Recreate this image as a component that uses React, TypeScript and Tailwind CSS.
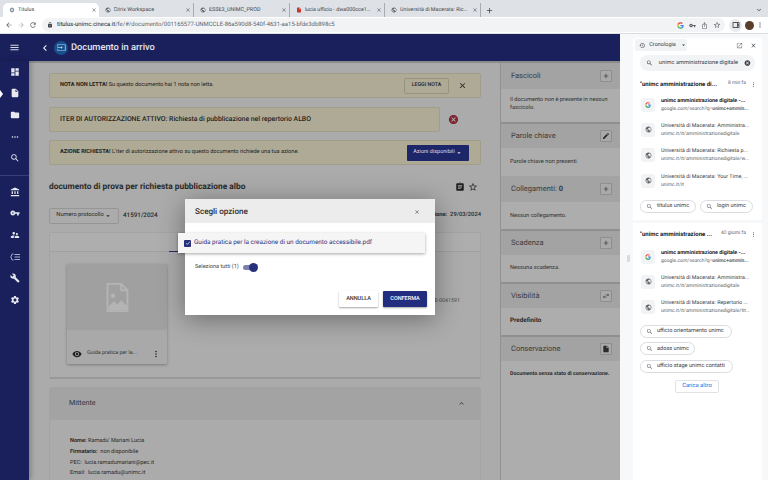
import React from "react";
import {
  MdMenu, MdDashboard, MdInsertDriveFile, MdFolder, MdMoreHoriz, MdSearch, MdAccountBalance, MdVpnKey,
  MdSupervisorAccount, MdBuild, MdSettings, MdChevronLeft, MdClose, MdArrowBack, MdArrowForward, MdRefresh,
  MdLock, MdAdd, MdArrowDropDown, MdCancel, MdAssignment, MdStarBorder, MdEdit, MdSwapHoriz, MdMoreVert,
  MdExpandLess, MdExpandMore, MdHistory, MdOpenInNew, MdCheck, MdVisibility, MdPublic,
  MdOutlineIosShare, MdOutlineViewSidebar, MdInput,
} from "react-icons/md";

const GoogleG = ({ s = 6 }: { s?: number }) => (
  <svg width={s} height={s} viewBox="0 0 24 24">
    <path fill="#4285F4" d="M23 12.300c0-.8-.1-1.600-.2-2.300H12v4.400h6.200a5.300 5.300 0 0 1-2.300 3.500v2.900h3.700c2.200-2 3.400-5 3.400-8.500z" />
    <path fill="#34A853" d="M12 23.500c3.100 0 5.700-1 7.600-2.800l-3.700-2.900c-1 .7-2.300 1.100-3.900 1.100-3 0-5.500-2-6.400-4.700H1.800v3a11.500 11.500 0 0 0 10.200 6.300z" />
    <path fill="#FBBC05" d="M5.600 14.200a6.900 6.900 0 0 1 0-4.400v-3H1.800a11.500 11.500 0 0 0 0 10.400z" />
    <path fill="#EA4335" d="M12 5.100c1.700 0 3.200.6 4.400 1.700l3.300-3.300A11.500 11.500 0 0 0 1.800 6.800l3.800 3c.9-2.700 3.400-4.700 6.400-4.700z" />
  </svg>
);

const Tab = ({ icon, label, active }: { icon: React.ReactNode; label: string; active?: boolean }) => (
  <div className={`w-[95.500px] h-[14px] flex items-center pl-[6px] pr-[2px] gap-[3px] text-[5.400px] text-[#45484d] shrink-0 border-r border-[#a8abb0] ${active ? "bg-white rounded-t-[5px] border-r-0" : ""}`}>
    {icon}
    <span className="flex-1 truncate">{label}</span>
    <MdClose size={6} className="text-[#50535a]" />
  </div>
);

const SideIcon = ({ children, marker }: { children: React.ReactNode; marker?: boolean }) => (
  <div className="relative h-[21.6px] flex items-center justify-center text-[#e8e9f0]">
    {marker && <div className="absolute left-0 top-[7px] w-0 h-0 border-y-[4px] border-y-transparent border-l-[3px] border-l-white" />}
    {children}
  </div>
);

const Alert = ({ children, w = "w-full" }: { children: React.ReactNode; w?: string }) => (
  <div className={`${w} h-[25px] px-[10px] flex items-center rounded-[2px] bg-[#aeaa96] border border-[#a19d8a] text-[5.600px] text-[#222]`}>
    {children}
  </div>
);

const PanelHead = ({ title, icon, sep = true }: { title: React.ReactNode; icon: React.ReactNode; sep?: boolean }) => (
  <div className={`h-[26px] pl-[10px] pr-[8px] flex items-center justify-between bg-[#a3a3a3] text-[7.500px] text-[#3a3a3a] shrink-0 ${sep ? "border-t-2 border-[#8f8f8f]" : ""}`}>
    <span>{title}</span>
    <span className="w-[12px] h-[12px] flex items-center justify-center border border-[#8e8e8e] rounded-[1px] text-[#2b2b2b] bg-[#a9a9a9]">{icon}</span>
  </div>
);

const Globe = ({ s = 7 }: { s?: number }) => <MdPublic size={s} className="text-[#5f6368] shrink-0" />;

const HistoryRow = ({ title, url, bold, g }: { title: string; url: React.ReactNode; bold?: boolean; g?: boolean }) => (
  <div className="h-[25.300px] flex items-center pl-[8px] pr-[10px] gap-[6px]">
    <div className="w-[14px] h-[14px] rounded-[3px] bg-[#f1f3f4] flex items-center justify-center shrink-0">
      {g ? <GoogleG /> : <Globe />}
    </div>
    <div className="min-w-0 flex-1 leading-[8px]">
      <div className={`whitespace-nowrap overflow-hidden text-[5.400px] ${bold ? "font-bold text-[#202124]" : "text-[#3c4043]"}`}>{title}</div>
      <div className="whitespace-nowrap overflow-hidden text-[5px] text-[#5f6368]">{url}</div>
    </div>
  </div>
);

const Chip = ({ label, w }: { label: string; w: string }) => (
  <div className={`${w} h-[13px] flex items-center gap-[4px] pl-[5px] rounded-full border border-[#dadce0] bg-white text-[5.600px] text-[#3c4043] shrink-0`}>
    <MdSearch size={7} className="text-[#5f6368] shrink-0" />
    <span className="whitespace-nowrap">{label}</span>
  </div>
);

const SectionTitle = ({ title, time }: { title: string; time: string }) => (
  <div className="flex items-center pl-[7px] pr-[5px] h-[12px]">
    <span className="flex-1 whitespace-nowrap overflow-hidden text-[6px] font-bold text-[#202124]">{title}</span>
    <span className="text-[5px] text-[#5f6368] mr-[4px] whitespace-nowrap">{time}</span>
    <MdMoreVert size={7} className="text-[#5f6368] shrink-0" />
  </div>
);

export default function App() {
  return (
    <div className="w-[768px] h-[480px] overflow-hidden flex flex-col bg-white font-['Roboto',sans-serif] [text-rendering:geometricPrecision]">
      {/* browser tabs */}
      <div className="h-[17px] bg-[#dee1e6] flex items-end pl-[3px] shrink-0">
        <Tab active label="Titulus" icon={<MdSettings size={6} className="text-[#7b8a9a]" />} />
        <Tab label="Citrix Workspace" icon={<Globe s={6} />} />
        <Tab label="ESSE3_UNIMC_PROD" icon={<Globe s={6} />} />
        <Tab label="lucia ufficio - dwa000cce140re" icon={<MdInsertDriveFile size={6} className="text-[#c0392b]" />} />
        <Tab label="Università di Macerata: Richies" icon={<Globe s={6} />} />
        <div className="w-[18px] flex items-center justify-center h-[14px] text-[#45484d]"><MdAdd size={9} /></div>
        <div className="flex-1 flex justify-end pr-[5px] h-[14px] items-center"><MdExpandMore size={8} className="text-[#45484d]" /></div>
      </div>
      {/* address bar */}
      <div className="h-[17px] bg-white border-b border-[#dadce0] flex items-center pl-[5px] pr-[4px] shrink-0 text-[#5f6368]">
        <MdArrowBack size={8} />
        <MdArrowForward size={8} className="ml-[4px] text-[#b8babd]" />
        <MdRefresh size={8} className="ml-[4px]" />
        <div className="ml-[5px] flex-1 h-[14px] rounded-full bg-[#f1f3f4] flex items-center pl-[3px] pr-[4px] gap-[2px]">
          <MdLock size={6} className="text-[#45484d] ml-[2px]" />
          <span className="ml-[2px] text-[5.950px] text-[#5f6368] flex-1 truncate"><span className="text-[#202124]">titulus-unimc.cineca.it</span>/fe/#/documento/001165577-UNMCCLE-86a590d8-540f-4631-aa15-bfde3db898c5</span>
          <div className="flex items-center gap-[5px]">
            <GoogleG s={7} />
            <MdVpnKey size={7} />
            <MdOutlineIosShare size={7} />
            <MdStarBorder size={8} />
          </div>
        </div>
        <div className="ml-[4px] w-[13px] h-[13px] rounded-full bg-[#e8eaed] flex items-center justify-center text-[#202124]"><MdOutlineViewSidebar size={8} /></div>
        <div className="ml-[3px] w-[9px] h-[9px] rounded-full bg-[#5a3d2b]" />
        <MdMoreVert size={8} className="ml-[2px]" />
      </div>

      <div className="flex-1 min-h-0 flex">
        {/* web app */}
        <div className="relative w-[620px] shrink-0 flex flex-col">
          <div className="h-[27px] bg-[#1a205c] flex items-center shrink-0 text-white">
            <div className="w-[29px] flex justify-center text-[#d5d7e4]"><MdMenu size={11} /></div>
            <MdChevronLeft size={12} className="ml-[10px]" />
            <div className="ml-[3px] w-[14px] h-[14px] rounded-full bg-[#174f8c] flex items-center justify-center text-[#bcd8f2]"><MdInput size={9} /></div>
            <span className="ml-[3px] text-[9.300px] font-medium text-[#e4e5ee]">Documento in arrivo</span>
          </div>
          <div className="flex-1 min-h-0 flex">
            {/* left rail */}
            <div className="relative w-[29px] bg-[#1a205c] shrink-0 overflow-hidden shadow-[2px_0_5px_rgba(0,0,0,0.25)]">
              <SideIcon><MdDashboard size={10} /></SideIcon>
              <SideIcon marker><MdInsertDriveFile size={10} /></SideIcon>
              <SideIcon><MdFolder size={10} /></SideIcon>
              <SideIcon><MdMoreHoriz size={10} /></SideIcon>
              <SideIcon><MdSearch size={10} /></SideIcon>
              <div className="mt-[6px] mb-[5px] border-t border-[#3a4077]" />
              <SideIcon><MdAccountBalance size={10} /></SideIcon>
              <SideIcon><MdVpnKey size={10} /></SideIcon>
              <SideIcon><MdSupervisorAccount size={10} /></SideIcon>
              <SideIcon>
                <svg width="10" height="8" viewBox="0 0 10 8" fill="none" stroke="#a9adc8" strokeWidth="1">
                  <path d="M3.500 1H2.200L.8 4l1.400 3h1.300" />
                  <path d="M4.500 1.500H10M4.500 4H10M4.500 6.500H10" />
                </svg>
              </SideIcon>
              <SideIcon><MdBuild size={10} /></SideIcon>
              <SideIcon><MdSettings size={10} /></SideIcon>
            </div>
            {/* main column */}
            <div className="w-[471px] shrink-0 bg-[#ababab] border-t-2 border-[#8b8b8b] pl-[20px] pr-[19px] pt-[10px] overflow-hidden">
              <Alert>
                <span className="flex-1"><b>NOTA NON LETTA!</b> Su questo documento hai 1 nota non letta.</span>
                <span className="w-[45px] h-[16px] flex items-center justify-center border border-[#97937f] rounded-[2px] text-[5.300px] font-medium mr-[9px]">LEGGI NOTA</span>
                <MdClose size={9} className="mr-[3px]" />
              </Alert>
              <div className="mt-[9px] flex items-center">
                <Alert w="w-[391px]"><span className="text-[6.850px] font-medium">ITER DI AUTORIZZAZIONE ATTIVO: Richiesta di pubblicazione nel repertorio ALBO</span></Alert>
                <MdCancel size={11} className="ml-[8px] text-[#7d2530]" />
              </div>
              <div className="mt-[8px]">
                <Alert>
                  <span className="flex-1"><b>AZIONE RICHIESTA!</b> L'iter di autorizzazione attivo su questo documento richiede una tua azione.</span>
                  <span className="w-[62px] h-[16px] flex items-center justify-center bg-[#1c2668] rounded-[1px] text-[5.500px] text-[#d8daea]">Azioni disponibili <MdArrowDropDown size={8} /></span>
                  <span className="w-[1px]" />
                </Alert>
              </div>
              <div className="mt-[15px] h-[14px] flex items-center">
                <span className="flex-1 text-[8.400px] font-bold text-[#2a2a2a]">documento di prova per richiesta pubblicazione albo</span>
                <MdAssignment size={10} className="text-[#1f1f1f]" />
                <MdStarBorder size={10} className="ml-[3px] mr-[3px] text-[#2a2a2a]" />
              </div>
              <div className="mt-[13px] flex items-center h-[17px]">
                <span className="w-[70px] h-[16px] flex items-center justify-center border border-[#969696] rounded-[2px] text-[5.700px] text-[#2a2a2a]">Numero protocollo <MdArrowDropDown size={8} /></span>
                <span className="ml-[4px] text-[6.300px] font-medium text-[#2a2a2a] flex-1">41591/2024</span>
                <span className="text-[5.800px] font-medium text-[#2a2a2a]"><b>Data registrazione:</b>&nbsp; 29/03/2024</span>
              </div>
              {/* tab card */}
              <div className="mt-[8px] h-[147px] bg-[#acacac] border border-[#a4a4a4] border-b-2 border-b-[#999] rounded-[2px] flex flex-col">
                <div className="h-[19px] border-b border-[#a0a0a0] bg-[#aeaeae] relative shrink-0">
                  <div className="absolute left-[119px] bottom-[-1px] w-[16px] h-[1.500px] bg-[#27306b]" />
                </div>
                <div className="flex-1 flex pl-[17px] pt-[12px]">
                  <div className="w-[100px] h-[100px] flex flex-col bg-[#a9a9a9] shadow-[0_1px_3px_rgba(0,0,0,0.3)] rounded-[1px]">
                    <div className="h-[66px] bg-[#a0a0a0] flex items-center justify-center">
                      <svg width="25" height="29" viewBox="0 0 26 32" fill="none" stroke="#b4b4b4" strokeWidth="2">
                        <path d="M2 1h15l7 7v23H2z" />
                        <path d="M17 1v7h7" />
                        <circle cx="8" cy="14" r="2.500" fill="#b4b4b4" stroke="none" />
                        <path d="M3 26l6-6 4 4 4-5 7 7v4H3z" fill="#b4b4b4" stroke="none" />
                      </svg>
                    </div>
                    <div className="flex-1 flex items-end pb-[5px] pl-[5px] pr-[6px] gap-[5px]">
                      <MdVisibility size={10} className="text-[#222]" />
                      <span className="flex-1 text-[5.300px] text-[#333] whitespace-nowrap pb-[1px]">Guida pratica per la...</span>
                      <MdMoreVert size={10} className="text-[#222]" />
                    </div>
                  </div>
                  <div className="ml-[246px] pt-[34px] text-[5.300px] text-[#4a4a4a]">UNMCCLE-0041591</div>
                </div>
              </div>
              {/* Mittente */}
              <div className="mt-[8px] h-[33px] bg-[#a3a3a3] rounded-t-[2px] flex items-center justify-between pl-[20px] pr-[15px] text-[7.200px] text-[#333]">
                <span>Mittente</span>
                <MdExpandLess size={9} className="text-[#444]" />
              </div>
              <div className="h-[70px] bg-[#ababab] border-x border-[#a4a4a4] pl-[20px] pt-[16px] text-[5.600px] text-[#2a2a2a] leading-[10.800px]">
                <div><b>Nome:</b> Ramadu' Mariani Lucia</div>
                <div><b>Firmatario:</b>&nbsp; non disponibile</div>
                <div>PEC:&nbsp; lucia.ramadumariani@pec.it</div>
                <div>Email:&nbsp; lucia.ramadu@unimc.it</div>
              </div>
            </div>
            {/* right panel */}
            <div className="w-[120px] shrink-0 bg-[#adadad] border-l border-[#919191] flex flex-col overflow-hidden border-t-2 border-t-[#8b8b8b]">
              <PanelHead sep={false} title="Fascicoli" icon={<MdAdd size={8} />} />
              <div className="h-[33px] px-[9px] pt-[8px] text-[5.700px] text-[#333] leading-[7.500px]">Il documento non è presente in nessun fascicolo.</div>
              <PanelHead title="Parole chiave" icon={<MdEdit size={8} />} />
              <div className="h-[28px] px-[9px] pt-[10px] text-[5.700px] text-[#333]">Parole chiave non presenti.</div>
              <PanelHead sep={false} title={<>Collegamenti: <b>0</b></>} icon={<MdAdd size={8} />} />
              <div className="h-[27px] px-[9px] pt-[10px] text-[5.700px] text-[#333]">Nessun collegamento.</div>
              <PanelHead title="Scadenza" icon={<MdAdd size={8} />} />
              <div className="h-[27px] px-[9px] pt-[9px] text-[5.700px] text-[#333]">Nessuna scadenza.</div>
              <PanelHead title="Visibilità" icon={<MdSwapHoriz size={8} />} />
              <div className="h-[27px] px-[9px] pt-[8px] text-[6.300px] font-bold text-[#2a2a2a]">Predefinito</div>
              <PanelHead title="Conservazione" icon={<MdInsertDriveFile size={8} />} />
              <div className="px-[9px] pt-[10px] text-[5.300px] font-bold text-[#2a2a2a]">Documento senza stato di conservazione.</div>
            </div>
          </div>

          {/* dialog */}
          <div className="absolute left-[185px] top-[165px] w-[250px] h-[116px] bg-white flex flex-col shadow-[0_4px_24px_rgba(0,0,0,0.38)]">
            <div className="h-[24px] bg-[#ececec] flex items-center justify-between pl-[10px] pr-[15px] shrink-0">
              <span className="text-[8.100px] font-medium text-[#2b2b2b]">Scegli opzione</span>
              <MdClose size={6} className="text-[#444] mt-[2px]" />
            </div>
            <div className="relative -ml-[7px] mt-[10px] w-[247px] h-[20px] bg-[#f5f5f5] shadow-[0_1px_3px_rgba(0,0,0,0.35)] flex items-center pl-[6px] gap-[3px] shrink-0">
              <span className="w-[7px] h-[7px] bg-[#27307d] rounded-[1px] flex items-center justify-center text-white"><MdCheck size={6} /></span>
              <span className="text-[6.400px] text-[#2a3384]">Guida pratica per la creazione di un documento accessibile.pdf</span>
            </div>
            <div className="mt-[9px] flex items-center pl-[10px] text-[5.600px] text-[#444] h-[10px]">
              <span>Seleziona tutti (1)</span>
              <span className="ml-[4px] relative w-[14px] h-[5px] rounded-full bg-[#7b80b0]">
                <span className="absolute right-[-1px] top-[-2px] w-[9px] h-[9px] rounded-full bg-[#27307d]" />
              </span>
            </div>
            <div className="mt-auto mb-[8px] mr-[8px] flex justify-end gap-[5px]">
              <span className="w-[39px] h-[16px] flex items-center justify-center bg-white rounded-[1px] shadow-[0_1px_2px_rgba(0,0,0,0.35)] text-[5.500px] font-medium text-[#333]">ANNULLA</span>
              <span className="w-[44px] h-[16px] flex items-center justify-center bg-[#232d7f] rounded-[1px] shadow-[0_1px_2px_rgba(0,0,0,0.35)] text-[5.500px] font-medium text-white">CONFERMA</span>
            </div>
          </div>
        </div>

        {/* browser side panel */}
        <div className="relative flex-1 bg-[#f7f8f9] pl-[13px] pr-[6px] pt-[4px] flex flex-col gap-[3px] min-w-0">
          <div className="absolute left-[7px] top-[221px] w-[3px] h-[7px] rounded-[1px] bg-[#d9dadc]" />
          <div className="bg-white h-[182px] rounded-t-[3px] shrink-0 flex flex-col">
            <div className="h-[14px] flex items-center pl-[2px] pr-[5px] shrink-0">
              <div className="w-[52px] h-[12px] rounded-[2px] bg-[#f1f3f4] flex items-center pl-[4px] gap-[4px] text-[5.500px] text-[#3c4043]">
                <MdHistory size={7} />
                <span className="flex-1">Cronologia</span>
                <MdArrowDropDown size={8} />
              </div>
              <MdOpenInNew size={7} className="ml-auto text-[#7a7d82]" />
              <MdClose size={7} className="ml-[7px] text-[#45484d]" />
            </div>
            <div className="ml-[7px] mt-[3px] w-[115px] h-[16px] rounded-full bg-[#f1f3f4] flex items-center pl-[6px] pr-[4px] gap-[6px] shrink-0">
              <MdSearch size={8} className="text-[#45484d]" />
              <span className="flex-1 whitespace-nowrap text-[5.700px] text-[#3c4043]">unimc amministrazione digitale</span>
              <MdCancel size={8} className="text-[#3c4043]" />
            </div>
            <div className="mt-[7px]"><SectionTitle title={'"unimc amministrazione di...'} time="8 min fa" /></div>
            <div className="mt-[2px]">
              <HistoryRow bold g title="unimc amministrazione digitale -..." url={<>google.com/search?q=<b>unimc+ammin...</b></>} />
              <HistoryRow title="Università di Macerata: Amministra..." url="unimc.it/it/amministrazionedigitale" />
              <HistoryRow title="Università di Macerata: Richiesta p..." url="unimc.it/it/amministrazionedigitale/w..." />
              <HistoryRow title="Università di Macerata: Your Time, ..." url="unimc.it/it" />
            </div>
            <div className="mt-[7px] flex gap-[4px] pl-[7px]">
              <Chip label="titulus unimc" w="w-[56px]" />
              <Chip label="login unimc" w="w-[53px]" />
            </div>
          </div>
          <div className="bg-white flex-1 min-h-0 flex flex-col pt-[5px]">
            <SectionTitle title={'"unimc amministrazione ...'} time="42 giorni fa" />
            <div className="mt-[4px]">
              <HistoryRow bold g title="unimc amministrazione digitale -..." url={<>google.com/search?q=<b>unimc+ammin...</b></>} />
              <HistoryRow title="Università di Macerata: Amministra..." url="unimc.it/it/amministrazionedigitale" />
              <HistoryRow title="Università di Macerata: Repertorio ..." url="unimc.it/it/amministrazionedigitale/tit..." />
            </div>
            <div className="mt-[5px] pl-[7px] flex flex-col gap-[4.500px] items-start">
              <Chip label="ufficio orientamento unimc" w="w-[92px]" />
              <Chip label="adoss unimc" w="w-[55px]" />
              <Chip label="ufficio stage unimc contatti" w="w-[93px]" />
            </div>
            <div className="mt-[7px] ml-[42px] w-[44px] h-[13px] flex items-center justify-center border border-[#e0e2e6] rounded-[2px] text-[5.800px] text-[#1a6fe0]">Carica altro</div>
          </div>
        </div>
      </div>
    </div>
  );
}
